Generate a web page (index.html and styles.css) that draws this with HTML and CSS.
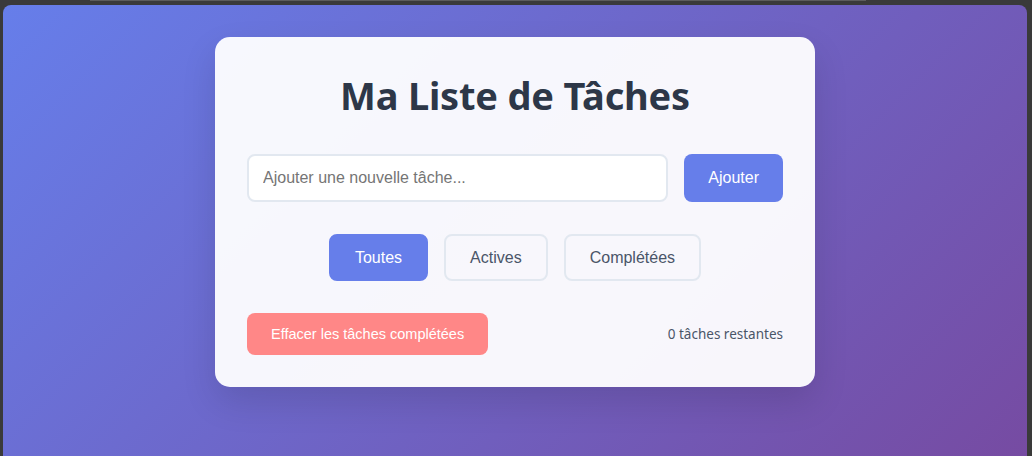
FILE: index.html
```html
<!DOCTYPE html>
<html lang="fr">
<head>
<meta charset="utf-8">
<title>Ma Liste de Tâches</title>
<link rel="stylesheet" href="styles.css">
</head>
<body>
<div class="chrome"><div class="chrome-line"></div></div>
<div class="viewport">
  <main class="card">
    <h1 class="title">Ma Liste de Tâches</h1>
    <div class="add-row">
      <input class="task-input" type="text" placeholder="Ajouter une nouvelle tâche...">
      <button class="btn btn-primary">Ajouter</button>
    </div>
    <div class="filters">
      <button class="btn filter active">Toutes</button>
      <button class="btn filter">Actives</button>
      <button class="btn filter">Complétées</button>
    </div>
    <div class="footer">
      <button class="btn btn-clear">Effacer les tâches complétées</button>
      <span class="count">0 tâches restantes</span>
    </div>
  </main>
</div>
</body>
</html>
```
FILE: styles.css
```css
* { box-sizing: border-box; }
html, body { margin: 0; height: 100%; }
body {
  background: #3a3a3a;
  font-family: "Noto Sans", "Open Sans", sans-serif;
  display: flex;
  flex-direction: column;
  overflow: hidden;
}
.chrome { height: 5px; flex: none; }
.chrome-line {
  margin-left: 90px;
  width: 776px;
  height: 1px;
  background: #5c5c5c;
}
.viewport {
  flex: 1;
  margin: 0 5px 0 3px;
  border-radius: 8px 8px 0 0;
  background: linear-gradient(135deg, #667eea 0%, #764ba2 100%);
  padding-top: 32px;
}
.card {
  width: 600px;
  margin: 0 auto;
  background: rgba(255, 255, 255, 0.95);
  border-radius: 15px;
  padding: 32px;
  box-shadow: 0 15px 35px rgba(0, 0, 0, 0.12);
}
.title {
  margin: 0 0 32px;
  text-align: center;
  color: #2d3748;
  font-size: 38px;
  font-weight: 700;
  line-height: 53px;
  letter-spacing: -0.2px;
}
.add-row {
  display: flex;
  gap: 16px;
}
.task-input {
  flex: 1;
  height: 48px;
  padding: 0 14px;
  border: 2px solid #e2e8f0;
  border-radius: 8px;
  background: #fff;
  font-family: "Liberation Sans", Arial, sans-serif;
  font-size: 16px;
  color: #2d3748;
  outline: none;
}
.task-input::placeholder { color: #757575; }
.btn {
  font-family: "Liberation Sans", Arial, sans-serif;
  font-size: 16px;
  border-radius: 8px;
  cursor: pointer;
}
.btn-primary {
  height: 48px;
  padding: 0 24px;
  border: none;
  background: #667eea;
  color: #fff;
}
.filters {
  display: flex;
  justify-content: center;
  gap: 16px;
  margin-top: 32px;
}
.filter {
  height: 47px;
  padding: 0 24px;
  border: 2px solid #e2e8f0;
  background: transparent;
  color: #4a5568;
}
.filter.active {
  background: #667eea;
  border-color: #667eea;
  color: #fff;
}
.footer {
  display: flex;
  justify-content: space-between;
  align-items: center;
  margin-top: 32px;
}
.btn-clear {
  height: 42px;
  padding: 0 24px;
  border: none;
  background: #ff8787;
  color: #fff;
  font-size: 14.5px;
}
.count {
  font-size: 13.5px;
  color: #4a5568;
}
```
